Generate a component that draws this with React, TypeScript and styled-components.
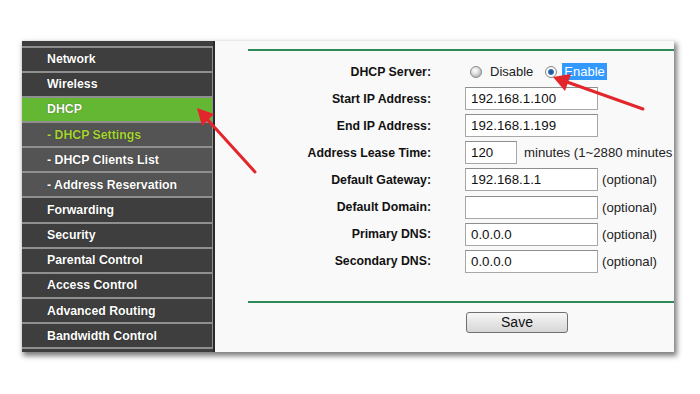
import React from "react";
import styled, { createGlobalStyle } from "styled-components";

const GlobalStyle = createGlobalStyle`
  html, body { margin: 0; padding: 0; background: #ffffff; }
  body { font-family: "Liberation Sans", Arial, sans-serif; }
  * { box-sizing: border-box; }
`;

const Page = styled.div`
  position: relative;
  width: 700px;
  height: 394px;
  padding: 41px 0 0 22px;
  overflow: hidden;
`;

const Frame = styled.div`
  display: flex;
  width: 652px;
  height: 311px;
  box-shadow: 2px 3px 5px 1px rgba(0, 0, 0, 0.5);
`;

const Sidebar = styled.nav`
  width: 193px;
  flex: none;
  background: #3e3e3e;
  border-right: 2px solid #2a2a2a;
  padding-top: 4.5px;
`;

const Menu = styled.ul`
  list-style: none;
  margin: 0;
  padding: 0;
  border-bottom: 2px solid #8f8f8f;
`;

type Kind = "main" | "active" | "sub" | "subActive";

const bgFor: Record<Kind, string> = {
  main: "#3e3e3e",
  active: "#64b732",
  sub: "#545454",
  subActive: "#545454",
};

const MenuItem = styled.li<{ $kind: Kind }>`
  height: 25.17px;
  border-top: 2px solid #8f8f8f;
  border-right: 1px solid #8f8f8f;
  background: ${(p) => bgFor[p.$kind]};
  color: ${(p) => (p.$kind === "subActive" ? "#a6d432" : "#ffffff")};
  font-weight: bold;
  font-size: 12.3px;
  display: flex;
  align-items: center;
  padding-left: 25px;
  text-shadow: 0 0 1px rgba(0, 0, 0, 0.6);
`;

const Content = styled.main`
  flex: 1;
  background: #f9f9f9;
  padding: 8px 0 0 33px;
  overflow: hidden;
`;

const Rule = styled.div<{ $gap: number }>`
  height: 2px;
  background: #2e8b57;
  margin-top: ${(p) => p.$gap}px;
`;

const Form = styled.div`
  display: grid;
  grid-template-columns: 183px 1fr;
  column-gap: 34px;
  grid-auto-rows: 27.1px;
  align-items: center;
  margin-top: 7px;
`;

const Label = styled.div`
  text-align: right;
  font-weight: bold;
  font-size: 12.3px;
  color: #111;
`;

const Field = styled.div`
  display: flex;
  align-items: center;
  white-space: nowrap;
  font-size: 13.2px;
  color: #222;
`;

const TextBox = styled.input<{ $w: number }>`
  width: ${(p) => p.$w}px;
  height: 23px;
  border: 1px solid #a7a7a7;
  border-top-color: #8e8e8e;
  background: #ffffff;
  font-family: "Liberation Sans", Arial, sans-serif;
  font-size: 13.3px;
  color: #111;
  padding: 0 0 0 5px;
  margin: 0;
  outline: none;
`;

const Note = styled.span<{ $gap: number }>`
  margin-left: ${(p) => p.$gap}px;
`;

const Radio = styled.span<{ $checked?: boolean }>`
  display: inline-block;
  width: 12px;
  height: 12px;
  border-radius: 50%;
  border: 1px solid #8a8a8a;
  background: ${(p) =>
    p.$checked
      ? "radial-gradient(circle at 50% 50%, #1d4f8c 0, #2f6fb5 2.5px, #ffffff 3.5px, #e8e8e8 6px)"
      : "radial-gradient(circle at 40% 35%, #ffffff 0, #e6e6e6 3px, #bdbdbd 6px)"};
`;

const RadioText = styled.span<{ $selected?: boolean }>`
  font-size: 13px;
  padding: 1px 2px;
  background: ${(p) => (p.$selected ? "#3399ff" : "transparent")};
  color: ${(p) => (p.$selected ? "#ffffff" : "#222")};
`;

const RadioGroup = styled.div`
  display: flex;
  align-items: center;
  padding-left: 5px;
`;

const Spacer = styled.span<{ $w: number }>`
  display: inline-block;
  width: ${(p) => p.$w}px;
`;

const ButtonRow = styled.div`
  padding-left: 218px;
  margin-top: 9px;
`;

const SaveButton = styled.button`
  width: 102px;
  height: 21px;
  border: 1px solid #707070;
  border-radius: 3px;
  background: linear-gradient(#f7f7f7, #e6e6e6 50%, #d6d6d6);
  font-family: "Liberation Sans", Arial, sans-serif;
  font-size: 14px;
  color: #111;
  padding: 0;
`;

const Overlay = styled.svg`
  position: absolute;
  left: 0;
  top: 0;
  pointer-events: none;
`;

const menu: { label: string; kind: Kind }[] = [
  { label: "Network", kind: "main" },
  { label: "Wireless", kind: "main" },
  { label: "DHCP", kind: "active" },
  { label: "- DHCP Settings", kind: "subActive" },
  { label: "- DHCP Clients List", kind: "sub" },
  { label: "- Address Reservation", kind: "sub" },
  { label: "Forwarding", kind: "main" },
  { label: "Security", kind: "main" },
  { label: "Parental Control", kind: "main" },
  { label: "Access Control", kind: "main" },
  { label: "Advanced Routing", kind: "main" },
  { label: "Bandwidth Control", kind: "main" },
];

const fields: { label: string; value: string; w: number; note?: string; gap?: number }[] = [
  { label: "Start IP Address:", value: "192.168.1.100", w: 133 },
  { label: "End IP Address:", value: "192.168.1.199", w: 133 },
  { label: "Address Lease Time:", value: "120", w: 52, note: "minutes (1~2880 minutes", gap: 7 },
  { label: "Default Gateway:", value: "192.168.1.1", w: 133, note: "(optional)", gap: 4 },
  { label: "Default Domain:", value: "", w: 133, note: "(optional)", gap: 4 },
  { label: "Primary DNS:", value: "0.0.0.0", w: 133, note: "(optional)", gap: 4 },
  { label: "Secondary DNS:", value: "0.0.0.0", w: 133, note: "(optional)", gap: 4 },
];

const RED = "#e3262b";

export default function App() {
  return (
    <>
      <GlobalStyle />
      <Page>
        <Frame>
          <Sidebar>
            <Menu>
              {menu.map((m) => (
                <MenuItem key={m.label} $kind={m.kind}>
                  {m.label}
                </MenuItem>
              ))}
            </Menu>
          </Sidebar>
          <Content>
            <Rule $gap={0} />
            <Form>
              <Label>DHCP Server:</Label>
              <RadioGroup>
                <Radio />
                <Spacer $w={6} />
                <RadioText>Disable</RadioText>
                <Spacer $w={10} />
                <Radio $checked />
                <Spacer $w={5} />
                <RadioText $selected>Enable</RadioText>
              </RadioGroup>
              {fields.map((f) => (
                <React.Fragment key={f.label}>
                  <Label>{f.label}</Label>
                  <Field>
                    <TextBox $w={f.w} readOnly value={f.value} />
                    {f.note && <Note $gap={f.gap ?? 4}>{f.note}</Note>}
                  </Field>
                </React.Fragment>
              ))}
            </Form>
            <Rule $gap={26} />
            <ButtonRow>
              <SaveButton>Save</SaveButton>
            </ButtonRow>
          </Content>
        </Frame>
        <Overlay width="700" height="394" viewBox="0 0 700 394">
          <line x1="255" y1="172" x2="207" y2="119" stroke={RED} strokeWidth="3" strokeLinecap="round" />
          <polygon points="197,108 214,114 202,126" fill={RED} />
          <line x1="643" y1="109" x2="567" y2="82" stroke={RED} strokeWidth="3" strokeLinecap="round" />
          <polygon points="553,77 571,74 565,91" fill={RED} />
        </Overlay>
      </Page>
    </>
  );
}
